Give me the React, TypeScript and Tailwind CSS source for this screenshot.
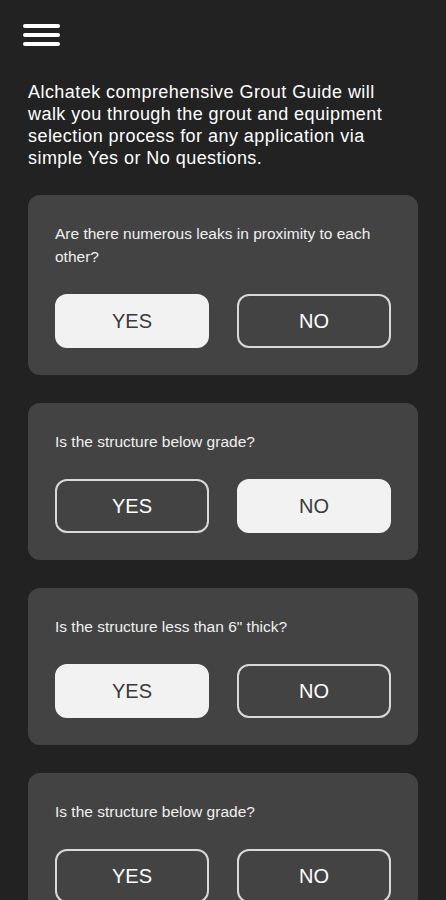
import { useState } from 'react';

type Answer = 'yes' | 'no' | null;

const questions: { id: number; text: string; initial: Answer }[] = [
  { id: 1, text: 'Are there numerous leaks in proximity to each other?', initial: 'yes' },
  { id: 2, text: 'Is the structure below grade?', initial: 'no' },
  { id: 3, text: 'Is the structure less than 6" thick?', initial: 'yes' },
  { id: 4, text: 'Is the structure below grade?', initial: null },
];

function ChoiceButton({ label, active, onClick }: { label: string; active: boolean; onClick: () => void }) {
  return (
    <button
      onClick={onClick}
      className={
        active
          ? 'flex-1 h-[54px] rounded-[12px] bg-[#f2f2f2] border-2 border-[#f2f2f2] text-[#3a3a3a] text-[20px]'
          : 'flex-1 h-[54px] rounded-[12px] bg-transparent border-2 border-[#d9d9d9] text-white text-[20px]'
      }
    >
      {label}
    </button>
  );
}

function QuestionCard({ text, initial }: { text: string; initial: Answer }) {
  const [answer, setAnswer] = useState<Answer>(initial);
  return (
    <div className="rounded-[12px] bg-[#434343] p-[27px] flex flex-col gap-[26px]">
      <div className="text-[15.5px] leading-[23px] text-[#f0f0f0] pr-2">{text}</div>
      <div className="flex gap-[28px]">
        <ChoiceButton label="YES" active={answer === 'yes'} onClick={() => setAnswer('yes')} />
        <ChoiceButton label="NO" active={answer === 'no'} onClick={() => setAnswer('no')} />
      </div>
    </div>
  );
}

export default function App() {
  return (
    <div
      className="h-[900px] overflow-hidden w-full bg-[#222222] px-[28px] pt-[24px]"
      style={{ fontFamily: '"Liberation Sans", Arial, sans-serif' }}
    >
      <button className="-ml-[5px] flex flex-col gap-[5px] w-[37px]">
        <span className="block h-[4px] w-full rounded-full bg-white" />
        <span className="block h-[4px] w-full rounded-full bg-white" />
        <span className="block h-[4px] w-full rounded-full bg-white" />
      </button>
      <p className="mt-[35px] max-w-[380px] text-[18px] tracking-[0.45px] leading-[22px] text-white">
        Alchatek comprehensive Grout Guide will walk you through the grout and equipment selection
        process for any application via simple Yes or No questions.
      </p>
      <div className="mt-[26px] flex flex-col gap-[28px]">
        {questions.map((q) => (
          <QuestionCard key={q.id} text={q.text} initial={q.initial} />
        ))}
      </div>
    </div>
  );
}
